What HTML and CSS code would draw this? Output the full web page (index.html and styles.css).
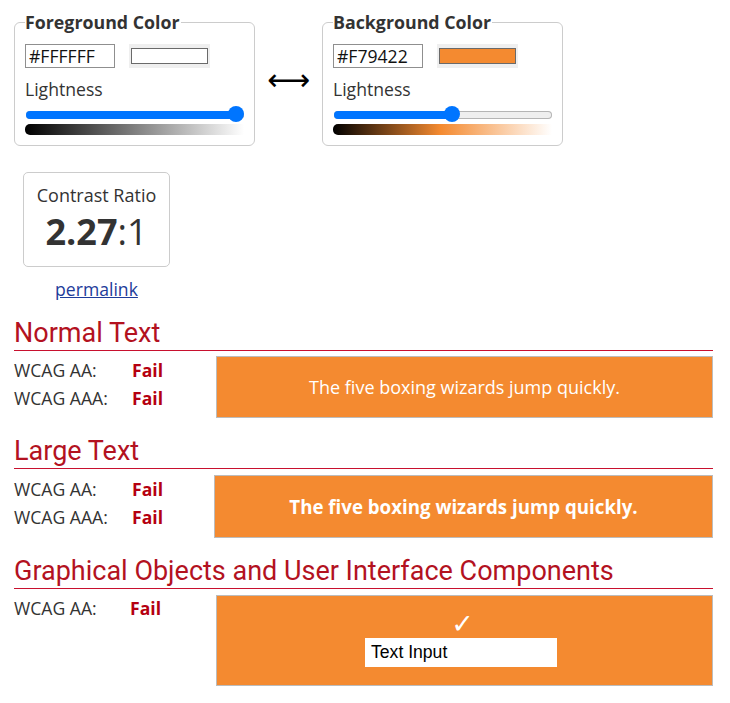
FILE: index.html
```html
<!DOCTYPE html>
<html lang="en">
<head>
<meta charset="utf-8">
<title>Contrast Checker</title>
<link rel="stylesheet" href="styles.css">
</head>
<body>
<main class="page">
  <div class="pickers">
    <fieldset class="picker">
      <legend>Foreground Color</legend>
      <div class="hexrow">
        <div class="hex">#FFFFFF</div>
        <div class="swatch"><span class="swatch-fill swatch-fg"></span></div>
      </div>
      <div class="label">Lightness</div>
      <div class="slider" style="--v:1">
        <div class="track"><div class="fill"></div></div>
        <span class="thumb"></span>
      </div>
      <div class="grad grad-fg"></div>
    </fieldset>
    <div class="swap">&#x27F7;</div>
    <fieldset class="picker">
      <legend>Background Color</legend>
      <div class="hexrow">
        <div class="hex">#F79422</div>
        <div class="swatch"><span class="swatch-fill swatch-bg"></span></div>
      </div>
      <div class="label">Lightness</div>
      <div class="slider" style="--v:0.545">
        <div class="track"><div class="fill"></div></div>
        <span class="thumb"></span>
      </div>
      <div class="grad grad-bg"></div>
    </fieldset>
  </div>

  <div class="ratio-wrap">
    <div class="ratio-box">
      <div class="ratio-title">Contrast Ratio</div>
      <div class="ratio-value"><b>2.27</b>:1</div>
    </div>
    <a class="permalink" href="#">permalink</a>
  </div>

  <section class="section">
    <h2 class="heading">Normal Text</h2>
    <div class="result">
      <div class="checks">
        <div class="check"><span class="level">WCAG AA:</span><span class="fail">Fail</span></div>
        <div class="check"><span class="level">WCAG AAA:</span><span class="fail">Fail</span></div>
      </div>
      <div class="sample sample-normal">The five boxing wizards jump quickly.</div>
    </div>
  </section>

  <section class="section section-large">
    <h2 class="heading">Large Text</h2>
    <div class="result result-large">
      <div class="checks">
        <div class="check"><span class="level">WCAG AA:</span><span class="fail">Fail</span></div>
        <div class="check"><span class="level">WCAG AAA:</span><span class="fail">Fail</span></div>
      </div>
      <div class="sample sample-large">The five boxing wizards jump quickly.</div>
    </div>
  </section>

  <section class="section section-graphic">
    <h2 class="heading">Graphical Objects and User Interface Components</h2>
    <div class="result result-graphic">
      <div class="checks">
        <div class="check"><span class="level level-short">WCAG AA:</span><span class="fail">Fail</span></div>
      </div>
      <div class="sample sample-graphic">
        <div class="tick">&#x2713;</div>
        <div class="textinput">Text Input</div>
      </div>
    </div>
  </section>
</main>
</body>
</html>
```

FILE: styles.css
```css
* { box-sizing: border-box; }

html, body {
  margin: 0;
  background: #fff;
}

body {
  font-family: "Open Sans", "DejaVu Sans", sans-serif;
  font-size: 17.6px;
  color: #333;
}

.page {
  padding: 11px 17px 0 14px;
}

/* ---------- color pickers ---------- */
.pickers {
  display: flex;
  align-items: flex-start;
}

.picker {
  width: 241px;
  margin: 0;
  padding: 11px 10px 10px 10px;
  border: 1px solid #cccccc;
  border-radius: 6px;
  min-width: 0;
}

.picker legend {
  padding: 0 1px 0 0;
  margin-left: 0;
  font-weight: 700;
  font-size: 17.8px;
  line-height: 22px;
  color: #333;
}

.hexrow {
  display: flex;
  align-items: center;
  gap: 14px;
  height: 24px;
}

.hex {
  width: 90px;
  height: 24px;
  border: 1px solid #8f8f8f;
  padding: 0 3px;
  font-size: 17.6px;
  line-height: 22px;
  color: #111;
}

.swatch {
  width: 81px;
  height: 24px;
  background: #efefef;
  padding: 4px 2px;
  display: flex;
}

.swatch-fill {
  flex: 1;
  border: 1px solid #6a6a6a;
}

.swatch-fg { background: #ffffff; }
.swatch-bg { background: #f48a30; }

.label {
  margin-top: 9px;
  line-height: 24px;
  color: #333;
}

.slider {
  position: relative;
  margin-top: 5px;
  height: 17px;
  display: flex;
  align-items: center;
  padding-left: 1px;
}

.track {
  flex: 1;
  height: 8px;
  border-radius: 4px;
  background: #efefef;
  box-shadow: inset 0 0 0 1px #b5b5b5;
  overflow: hidden;
}

.fill {
  height: 100%;
  width: calc(8px + (100% - 16px) * var(--v));
  background: #0075ff;
}

.thumb {
  position: absolute;
  top: 0;
  left: calc(1px + (100% - 17px) * var(--v));
  width: 16px;
  height: 16px;
  border-radius: 50%;
  background: #0075ff;
}

.grad {
  margin-top: 1px;
  height: 11px;
  border-radius: 5px 0 0 5px;
}

.grad-fg { background: linear-gradient(to right, #000 0%, #fff 100%); }
.grad-bg { background: linear-gradient(to right, #000 0%, #f48a30 49%, #fff 100%); }

.swap {
  width: 67px;
  text-align: center;
  margin-top: 52px;
  font-family: "DejaVu Sans", sans-serif;
  font-size: 30px;
  line-height: 34px;
  color: #000;
}

/* ---------- ratio ---------- */
.ratio-wrap {
  display: flex;
  flex-direction: column;
  align-items: center;
  width: 147px;
  margin: 26px 0 0 9px;
}

.ratio-box {
  width: 147px;
  height: 95px;
  border: 1px solid #cccccc;
  border-radius: 5px;
  padding-top: 10px;
  text-align: center;
}

.ratio-title {
  font-size: 18px;
  line-height: 24px;
  color: #333;
}

.ratio-value {
  margin-top: 3px;
  font-size: 36px;
  line-height: 44px;
  color: #333;
}

.ratio-value b {
  font-weight: 700;
}

.permalink {
  margin-top: 10px;
  line-height: 24px;
  color: #1e3c9a;
  text-decoration: underline;
}

/* ---------- sections ---------- */
.section {
  margin-top: 17px;
}

.section-large { margin-top: 18px; }
.section-graphic { margin-top: 18px; }

.heading {
  margin: 0;
  padding-bottom: 2px;
  border-bottom: 1px solid #c8102e;
  font-family: Roboto, "Liberation Sans", sans-serif;
  font-weight: 400;
  font-size: 27px;
  line-height: 30px;
  color: #b3121f;
}

.result {
  display: grid;
  grid-template-columns: 202px 1fr;
  margin-top: 5px;
}

.result-large {
  grid-template-columns: 200px 1fr;
  margin-top: 6px;
}

.check {
  display: flex;
  line-height: 28px;
}

.level {
  width: 118px;
  color: #333;
}

.level-short { width: 116px; }

.fail {
  font-weight: 700;
  color: #b50010;
}

.sample {
  background: #f48a30;
  border: 1px solid #bcbcbc;
  color: #fff;
  display: flex;
  align-items: center;
  justify-content: center;
}

.sample-normal {
  height: 62px;
  font-size: 18px;
}

.sample-large {
  height: 63px;
  font-size: 18.7px;
  font-weight: 700;
}

.result-graphic { margin-top: 5px; }

.sample-graphic {
  height: 91px;
  flex-direction: column;
  justify-content: flex-start;
  padding-top: 14px;
  margin-top: 1px;
}

.tick {
  font-family: "DejaVu Sans", sans-serif;
  font-size: 27px;
  line-height: 28px;
  color: #fff;
  margin-right: 4px;
}

.textinput {
  width: 192px;
  height: 29px;
  margin-right: 7px;
  background: #fff;
  color: #000;
  font-family: "Liberation Sans", Arial, sans-serif;
  font-size: 17.6px;
  line-height: 29px;
  padding-left: 6px;
}
```
